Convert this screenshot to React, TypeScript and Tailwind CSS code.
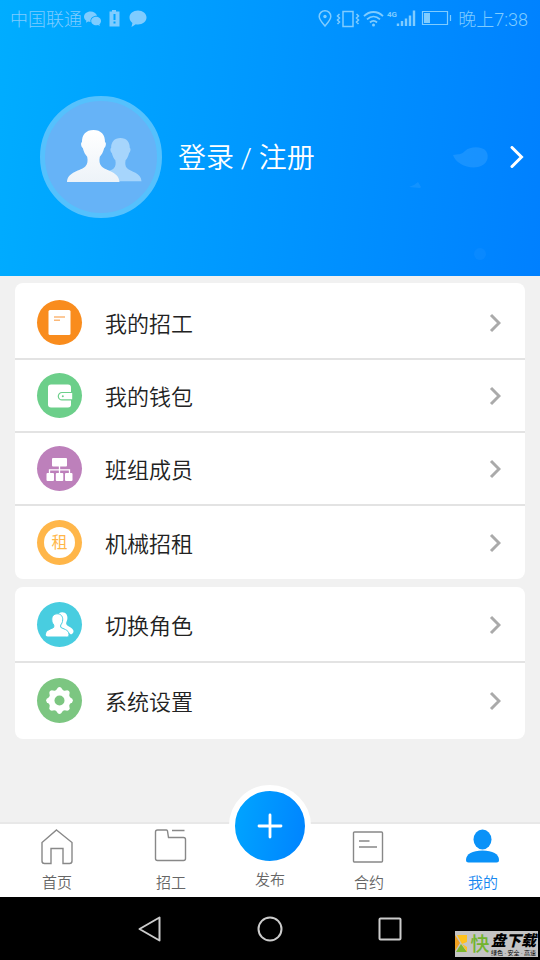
import React from 'react'

type MenuItem = {
  label: string
  color: string
  icon: React.ReactNode
}

const recruitIcon = (
  <svg viewBox="0 0 45 45" className="h-full w-full">
    <rect x="11.500" y="10" width="22" height="25" rx="1.500" fill="#fff" />
    <path d="M17 17h11M17 20.300h6" stroke="#fbb878" strokeWidth="1.500" fill="none" />
  </svg>
)

const walletIcon = (
  <svg viewBox="0 0 45 45" className="h-full w-full">
    <rect x="11" y="11.500" width="23" height="23" rx="3" fill="#fff" />
    <path d="M36 19.500H25a3.700 3.700 0 0 0 0 7.400h11z" fill="#fff" stroke="#6ccf8a" strokeWidth="1.200" />
    <circle cx="25.800" cy="23.200" r="1" fill="#6ccf8a" />
    <path d="M35.500 18.500h2v10h-2z" fill="#6ccf8a" />
  </svg>
)

const teamIcon = (
  <svg viewBox="0 0 45 45" className="h-full w-full">
    <g fill="#fff">
      <rect x="15" y="12" width="15" height="8.500" rx="1" />
      <rect x="9.500" y="27" width="7.500" height="8" rx="1" />
      <rect x="18.800" y="27" width="7.500" height="8" rx="1" />
      <rect x="28" y="27" width="7.500" height="8" rx="1" />
    </g>
    <path d="M22.500 20v8M12.500 28v-4.200h20V28" stroke="#fff" strokeWidth="1.300" fill="none" />
  </svg>
)

const rentIcon = (
  <span className="flex h-[31px] w-[31px] items-center justify-center rounded-full bg-white pt-px text-base text-[#ffb649]">
    租
  </span>
)

const roleIcon = (
  <svg viewBox="0 0 45 45" className="h-full w-full">
    <path
      d="M22 11.300c2-1.600 6-1.500 7.600 1.100 1.200 2 1 4.800.1 6.800-.8 1.800-.8 3.200.6 4.200 2 1.500 5 2.300 6 4.900.7 1.900-.3 3.600-2.300 4.200l-4-3-8-6z"
      fill="#fff"
    />
    <path
      d="M20.200 11.800c3.600 0 5.700 2.500 5.500 6-.1 2.300-.9 4-2 5.200v2.200c1.700 1.700 8.300 2.200 8.300 7.200 0 1.700-.9 2.600-2.300 2.600H10.900c-1.600 0-2.500-.9-2.500-2.500 0-4.900 6.800-5.600 8.400-7.300V23c-1.100-1.200-2-3-2-5.200-.1-3.500 1.900-6 5.400-6z"
      fill="#fff"
      stroke="#48cde0"
      strokeWidth="1"
    />
  </svg>
)

const settingsIcon = (
  <svg viewBox="0 0 45 45" className="h-full w-full">
    <circle cx="22.500" cy="22.500" r="10.800" fill="#fff" />
    <g fill="#fff">
      {[0, 45, 90, 135, 180, 225, 270, 315].map((angle) => (
        <path key={angle} d="M18.500 13l2.300-3.200q1.700-1.600 3.400 0L26.500 13z" transform={`rotate(${angle} 22.5 22.5)`} />
      ))}
    </g>
    <circle cx="22.500" cy="22.500" r="5" fill="#7cc681" />
  </svg>
)

const workItems: MenuItem[] = [
  { label: '我的招工', color: 'bg-[#f98c1d]', icon: recruitIcon },
  { label: '我的钱包', color: 'bg-[#6ccf8a]', icon: walletIcon },
  { label: '班组成员', color: 'bg-[#bd80bb]', icon: teamIcon },
  { label: '机械招租', color: 'bg-[#ffb649]', icon: rentIcon },
]

const accountItems: MenuItem[] = [
  { label: '切换角色', color: 'bg-[#48cde0]', icon: roleIcon },
  { label: '系统设置', color: 'bg-[#7cc681]', icon: settingsIcon },
]

const StatusBar: React.FC = () => {
  return (
    <div className="flex h-[38px] items-center justify-between pr-3 pl-[10px] text-lg font-light text-[#7fccff]">
      <div className="flex items-center gap-[2px]">
        <span className="pt-[2px]">中国联通</span>
        {/* chat app, battery warning and message notifications */}
        <svg width="64" height="20" viewBox="0 0 64 20" fill="currentColor">
          <path d="M6.500 2.500C3 2.500 0 4.800 0 7.800c0 1.700 1 3.100 2.400 4l-.5 2 2.300-1.200c.8.200 1.500.3 2.300.3-.6-3.600 2.500-6.200 6.500-6.100-.7-2.500-3.400-4.300-6.500-4.300z" />
          <path d="M17 11.900c0-2.400-2.200-4.200-4.900-4.200s-4.900 1.800-4.900 4.200 2.200 4.300 4.900 4.300c.7 0 1.300-.1 1.900-.3l1.800 1-.4-1.700c1-.8 1.600-2 1.600-3.300z" />
          <path d="M28 1h4v1.500h3.500v15h-10v-15H28zM29.500 5v6h2V5zM29.500 12.500v2h2v-2z" fillRule="evenodd" />
          <path d="M54 1.500c-4.800 0-8.500 2.900-8.500 7 0 2.300 1.100 4.200 2.900 5.400L47.500 18l4.300-2.700c.7.100 1.400.2 2.200.2 4.700 0 8.500-2.900 8.500-7s-3.800-7-8.500-7z" />
        </svg>
      </div>
      <div className="flex items-center gap-[6px]">
        <svg width="135" height="20" viewBox="0 0 135 20" fill="none" stroke="currentColor" strokeWidth="1.500">
          <path d="M8 17C4.500 13 2.200 10.500 2.200 7.500a5.800 5.800 0 0 1 11.600 0C13.800 10.500 11.500 13 8 17z" />
          <circle cx="8" cy="7.500" r="1.700" fill="currentColor" stroke="none" />
          <path d="M26 2.500h10v15H26zM22.500 5l-2 2 2 2-2 2 2 2-2 2M39.500 5l2 2-2 2 2 2-2 2 2 2" />
          <path d="M47 7.200c5.500-5.600 13.500-5.600 19 0M50 10.400c4-3.800 9-3.800 13 0M53 13.500c2-2 5-2 7 0" strokeWidth="1.800" />
          <circle cx="56.500" cy="16" r="1.500" fill="currentColor" stroke="none" />
          <path d="M81 17v-2.500M85 17v-5M89 17V9.500M93 17V6.500M97 17V1.500" strokeWidth="2.400" />
          <path d="M105.500 2.500h25v13h-25zM133.500 6v6" strokeWidth="1.200" />
          <path d="M107 4h6v10h-6z" fill="currentColor" stroke="none" />
          <text x="70" y="8" fontSize="8" fontWeight="bold" fill="currentColor" stroke="none">4G</text>
        </svg>
        <span className="pt-[2px]">晚上7:38</span>
      </div>
    </div>
  )
}

const Avatar: React.FC = () => {
  const person =
    'M26.500 0c7.500 0 11.700 4.800 11.500 12 1.600.6 1 4.800-.8 6-1 4-2.500 6.800-4.400 8.700-.8 4-.4 7.500 1.900 9.800C39 41 52 41.500 52.500 52H0c.5-10.500 14-11 18.300-15.500 2.300-2.300 2.700-5.800 1.900-9.800-1.900-1.900-3.400-4.700-4.400-8.700-1.800-1.200-2.400-5.400-.8-6C14.800 4.800 19 0 26.500 0z'
  return (
    <span className="flex h-[122px] w-[122px] shrink-0 items-center justify-center rounded-full border-[5px] border-[#55c1fd] bg-[#66b3f7] pl-2">
      <svg width="76" height="54" viewBox="0 0 76 54">
        <defs>
          <linearGradient id="person" x1="0" y1="0" x2="0" y2="1">
            <stop offset="0" stopColor="#fff" />
            <stop offset="1" stopColor="#edf3f8" />
          </linearGradient>
        </defs>
        <path d={person} transform="translate(32 8) scale(.81 .83)" fill="#a6d5fc" />
        <path d={person} fill="url(#person)" />
      </svg>
    </span>
  )
}

const Header: React.FC = () => {
  return (
    <header className="relative bg-linear-[96deg,#00adff,#0080ff]">
      <StatusBar />
      <a href="#login" className="flex items-center py-[58px] pr-4 pl-10 text-white">
        <Avatar />
        <span className="ml-4 flex-1 pt-1 text-[28px] font-[350]">登录 / 注册</span>
        <svg width="14" height="22" viewBox="0 0 14 22" fill="none" stroke="currentColor" strokeWidth="3">
          <path d="M2 1.500l9.500 9.500L2 20.500" strokeLinecap="round" />
        </svg>
      </a>
      <svg className="absolute right-0 bottom-0" width="140" height="140" viewBox="0 0 140 140" fill="#3ba4ff">
        <path d="M53 19c5-1 8 0 12-4 5-5 17-5 21 0 4 6 1 14-8 16-10 2-22-3-25-12z" opacity=".4" />
        <path d="M9 51l5-2 4-3 3 5-1 1z" opacity=".3" />
        <circle cx="80" cy="118" r="6" opacity=".15" />
      </svg>
    </header>
  )
}

const MenuRow: React.FC<{ item: MenuItem; height: string }> = ({ item, height }) => {
  return (
    <li className={height}>
      <a href={`#${item.label}`} className="flex h-full items-center pr-6 pl-[22px]">
        <span className={`flex h-[45px] w-[45px] shrink-0 items-center justify-center rounded-full ${item.color}`}>
          {item.icon}
        </span>
        <span className="ml-[23px] flex-1 pt-[3px] text-[22px] font-[350] text-[#222]">{item.label}</span>
        <svg width="12" height="20" viewBox="0 0 12 20" fill="none" stroke="#aaa" strokeWidth="3">
          <path d="M2 2l8 8-8 8" />
        </svg>
      </a>
    </li>
  )
}

const Tab: React.FC<{ label: string; active?: boolean; children: React.ReactNode }> = ({ label, active, children }) => {
  return (
    <a
      href={`#${label}`}
      className={`flex flex-col items-center gap-[5px] pt-1 text-[15px] leading-6 font-[350] ${active ? 'text-[#1687f0]' : 'text-[#666]'}`}
    >
      <svg width="38" height="38" viewBox="0 0 38 38" fill="none" stroke="#888" strokeWidth="1.400">
        {children}
      </svg>
      <span>{label}</span>
    </a>
  )
}

const TabBar: React.FC = () => {
  return (
    <nav className="grid h-[75px] grid-cols-[1fr_1fr_84px_1fr_1fr] border-t-2 border-[#e8e8e8] bg-white">
      <Tab label="首页">
        <path d="M18.500 2L34 14.500V33q0 2.500-2.500 2.500H25v-15H13v15H6.500Q4 35.500 4 33V14.500z" />
      </Tab>
      <Tab label="招工">
        <path d="M14.500 2H5.500Q3.500 2 3.500 4v26.500q0 2 2 2h26q2 0 2-2v-19q0-2-2-2h-15L15.500 3q-.2-1-1-1zM20 2.500h12.500" />
      </Tab>
      <button type="button" className="-mt-[39px] flex flex-col items-center gap-px text-[15px] leading-6 font-[350] text-[#666]">
        <span className="flex h-[82px] w-[82px] shrink-0 items-center justify-center rounded-full border-[6px] border-white bg-linear-[100deg,#00a8ff,#0080ff] bg-origin-border">
          <svg width="26" height="26" viewBox="0 0 26 26" stroke="#fff" strokeWidth="2.800" strokeLinecap="round">
            <path d="M13 2v22M2 13h22" />
          </svg>
        </span>
        <span>发布</span>
      </button>
      <Tab label="合约">
        <rect x="3.500" y="4" width="29" height="30" rx="1" />
        <path d="M9 13h10.500M9 19h18" />
      </Tab>
      <Tab label="我的" active>
        <g fill="#0a92f8" stroke="none">
          <ellipse cx="18.500" cy="11.500" rx="9" ry="10" />
          <path d="M2 32c0-6 6.500-9.500 16.500-9.500S35 26 35 32q0 2.500-2.500 2.500h-28Q2 34.500 2 32z" />
        </g>
      </Tab>
    </nav>
  )
}

const SystemBar: React.FC = () => {
  return (
    <div className="relative flex h-[63px] items-center justify-center gap-[94px] bg-black">
      <button type="button" aria-label="返回">
        <svg width="26" height="26" viewBox="0 0 26 26" fill="none" stroke="#ccc" strokeWidth="2" strokeLinejoin="round">
          <path d="M22.500 1.500v23L2.500 13z" />
        </svg>
      </button>
      <button type="button" aria-label="主屏幕">
        <svg width="26" height="26" viewBox="0 0 26 26" fill="none" stroke="#ccc" strokeWidth="2">
          <circle cx="13" cy="13" r="11.500" />
        </svg>
      </button>
      <button type="button" aria-label="最近任务">
        <svg width="26" height="26" viewBox="0 0 26 26" fill="none" stroke="#ccc" strokeWidth="2">
          <rect x="2.500" y="2.500" width="21" height="21" rx="1" />
        </svg>
      </button>
      <div className="absolute right-[2px] bottom-[3px] flex h-[26px] w-[83px] items-center bg-[#c4c4c4]">
        <svg width="14" height="26" viewBox="0 0 14 26" className="shrink-0">
          <path d="M0 4l5 8-5 8z" fill="#f0a020" />
          <path d="M2 4h10v7l-5 2z" fill="#ffc21c" />
          <path d="M1 21l5-8 6 8z" fill="#7cb82c" />
          <path d="M7 13l5 3v5z" fill="#ffc21c" />
        </svg>
        <span className="w-[22px] text-center text-[19px] leading-none font-medium text-[#72b42e]">快</span>
        <span className="flex flex-col items-center text-black">
          <span className="text-[15px] leading-4 font-black whitespace-nowrap italic">盘下载</span>
          <span className="text-[6px] leading-[7px] whitespace-nowrap">绿色 · 安全 · 高速</span>
        </span>
      </div>
    </div>
  )
}

const App: React.FC = () => {
  return (
    <div className="flex min-h-screen flex-col bg-[#f1f1f1] font-[Roboto,'Noto_Sans_CJK_SC',sans-serif]">
      <Header />
      <main className="flex flex-1 flex-col gap-2 px-[15px] pt-[7px]">
        <ul className="divide-y-2 divide-[#e3e3e3] rounded-lg bg-white pt-1">
          {workItems.map((item) => (
            <MenuRow key={item.label} item={item} height="h-[73px]" />
          ))}
        </ul>
        <ul className="divide-y-2 divide-[#e3e3e3] rounded-lg bg-white py-px">
          {accountItems.map((item) => (
            <MenuRow key={item.label} item={item} height="h-[75px]" />
          ))}
        </ul>
      </main>
      <TabBar />
      <SystemBar />
    </div>
  )
}

export default App
